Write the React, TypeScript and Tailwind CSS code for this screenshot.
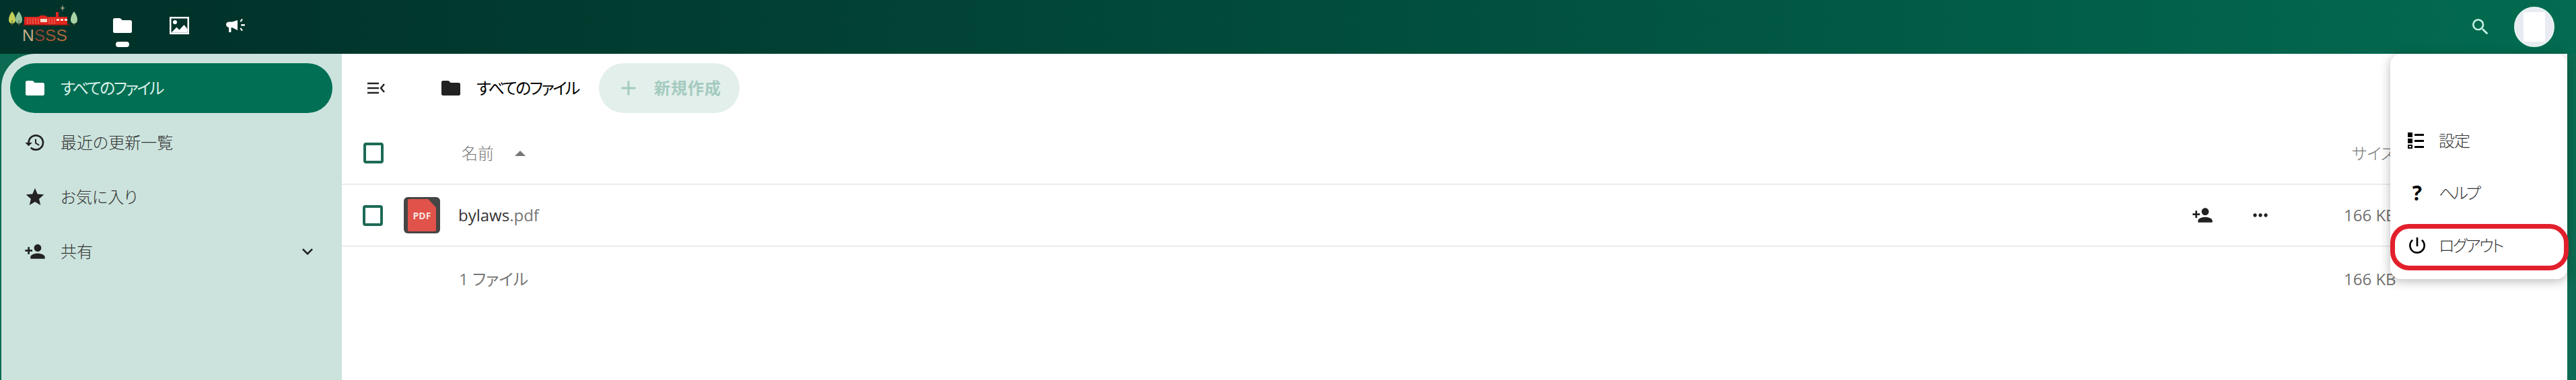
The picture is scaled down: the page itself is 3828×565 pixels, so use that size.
import { MdAdd, MdExpandMore, MdHistory, MdMoreHoriz, MdPersonAdd, MdPowerSettingsNew, MdSearch, MdStar } from 'react-icons/md';

// Nextcloud-style folder with soft corners
function FolderIcon({ className }: { className?: string }) {
  return (
    <svg viewBox="0 0 28 22" className={className} fill="currentColor">
      <path d="M2.500 0h7.200c.7 0 1.300.3 1.800.8L13.600 3h11.900A2.500 2.500 0 0 1 28 5.500v14a2.500 2.500 0 0 1-2.500 2.500h-23A2.500 2.500 0 0 1 0 19.500v-17A2.500 2.500 0 0 1 2.500 0z" />
    </svg>
  );
}

function PhotoIcon() {
  return (
    <svg viewBox="0 0 29 26" className="h-[26px] w-[29px]">
      <path fill="#fff" fillRule="evenodd" d="M0 0h29v26H0z M2.500 2.500v21h24v-21z" />
      <circle cx="8" cy="8" r="3" fill="#fff" />
      <path fill="#fff" d="M2.500 23.500l8-8 4 4 7-7.500 5 6v5.500z" />
    </svg>
  );
}

function MegaphoneIcon() {
  return (
    <svg viewBox="0 0 28 22" className="h-[22px] w-[28px]" fill="#fff">
      <path d="M17 3v15l-8-4H7.500v6a1 1 0 0 1-1 1H5a1 1 0 0 1-1-1v-6.200C1.500 13.300 0 11.500 0 9.500 0 7 2 5.500 4.500 5.500H9z" />
      <rect x="22" y="9" width="6" height="2.500" rx="1" />
      <path d="M20.500 4.500l2.700-3.800 1.700 1.200-2.700 3.800z" />
      <path d="M20.500 15.500l2.700 3.800 1.700-1.200-2.700-3.800z" />
    </svg>
  );
}

function Logo() {
  return (
    <svg viewBox="0 0 130 80" className="h-20 w-[130px] shrink-0">
      <path fill="#c3cf57" d="M18 17c3 4 5 8 5 12 0 4-2 6-5 6s-5-2-5-6c0-4 2-8 5-12z" />
      <path fill="#8fc09a" d="M28 17c3 4 5 8 5 12 0 4-2 6-5 6s-5-2-5-6c0-4 2-8 5-12z" />
      <path fill="#6b6a3a" d="M17.400 30h1.200v8h-1.200zM27.400 30h1.200v8h-1.200zM109.400 30h1.200v8h-1.200z" />
      <path fill="#a9d3a4" d="M110 17c3 4 5 8 5 12 0 4-2 6-5 6s-5-2-5-6c0-4 2-8 5-12z" />
      <path fill="#e0261f" d="M36 25h21c2-3 11-3 13 0h13v-7h4v7h13v12H36z" />
      <path fill="#f3d9c7" d="M60 28h10v5H60zM84 28h4v3h-4zM90 28h4v3h-4zM96 28h4v3h-4z" />
      <path stroke="#f09a85" strokeWidth="0.700" d="M41 27v9M45 27v9M49 27v9M53 27v9M57 27v9M73 27v9M77 27v9M81 27v9" />
      <path fill="#7c1a14" d="M34 36.500h70v1.500H34z" />
      <path fill="#9aa07a" d="M92 13l1 4 1-4 3-1-3-1-1-4-1 4-3 1z" />
      <text x="33" y="61" fontFamily="'Liberation Sans', sans-serif" fontSize="24.500">
        <tspan fill="#c9ae8b">N</tspan>
        <tspan fill="#8d4333">S</tspan>
        <tspan fill="#a2552f">S</tspan>
        <tspan fill="#b0683b">S</tspan>
      </text>
    </svg>
  );
}

function SettingsIcon() {
  return (
    <svg viewBox="0 0 24 24" className="h-6 w-6">
      <path fill="#000" d="M0 0h7v7H0zM0 9h7v7H0zM10 2h14v3H10zM10 11h14v3H10zM10 20h14v3H10z" />
      <path fill="#000" fillRule="evenodd" d="M0 18h7v6H0z M2 20v2h3v-2z" />
    </svg>
  );
}

function NavItem({ children, active }: { children: React.ReactNode; active?: boolean }) {
  return (
    <div className="relative flex h-20 w-[84px] items-center justify-center pb-[4px]">
      {children}
      {active && <span className="absolute bottom-[10px] left-[32px] h-2 w-5 rounded-full bg-white" />}
    </div>
  );
}

const sideItems = [
  { label: '最近の更新一覧', icon: <MdHistory className="h-8 w-8" /> },
  { label: 'お気に入り', icon: <MdStar className="h-8 w-8" /> },
  { label: '共有', icon: <MdPersonAdd className="h-8 w-8" />, chevron: true },
];

function Checkbox() {
  return <span className="block h-[31px] w-[30px] rounded-[4px] border-[4px] border-[#1d6a55]" />;
}

function PdfIcon() {
  return (
    <div className="flex h-[54px] w-[54px] shrink-0 items-center justify-center rounded-[6px] bg-[#454545]">
      <div className="flex h-12 w-[42px] items-center justify-center rounded-[2px] bg-[#e0524a] [clip-path:polygon(0_0,72%_0,100%_26%,100%_100%,0_100%)]">
        <span className="text-[14px] font-bold text-[#fbe3e0]">PDF</span>
      </div>
    </div>
  );
}

export default function App() {
  return (
    <div className="relative flex h-screen flex-col overflow-hidden bg-[#0c6b52] font-['Open_Sans','Noto_Sans_CJK_JP',sans-serif] [font-feature-settings:'palt'] text-[24px] text-[#333]">
      {/* Top bar */}
      <header className="flex h-20 shrink-0 items-center bg-gradient-to-r from-[#01332a] from-[8%] to-[#026b50]">
        <div className="w-[140px]">
          <Logo />
        </div>
        <NavItem active>
          <FolderIcon className="h-[22px] w-7 text-white" />
        </NavItem>
        <NavItem>
          <PhotoIcon />
        </NavItem>
        <NavItem>
          <MegaphoneIcon />
        </NavItem>
        <div className="flex-1" />
        <MdSearch className="mr-[34px] h-8 w-8 text-[#c4f1e3]" />
        <div className="mr-[32px] flex h-[60px] w-[60px] items-center justify-center rounded-full border-2 border-[#e6f4f0] bg-[#e9ebf3]">
          <span className="h-[44px] w-[32px] bg-white" />
        </div>
      </header>

      <div className="flex min-h-0 flex-1 pl-[2px] pr-[13px]">
        {/* Sidebar */}
        <aside className="w-[506px] shrink-0 rounded-tl-[50px] bg-[#cce3dd] pt-[14px] pl-[13px] pr-[14px]">
          <div className="flex h-[74px] items-center rounded-full bg-[#006f53] pl-[23px] text-[#d8f0e9]">
            <FolderIcon className="h-[22px] w-7 text-white" />
            <span className="ml-[24px] tracking-[-2.500px]">すべてのファイル</span>
          </div>
          <ul className="mt-[3px]">
            {sideItems.map((item) => (
              <li key={item.label} className="flex h-[81px] items-center pl-[21px]">
                <span className="flex w-8 justify-center text-[#222]">{item.icon}</span>
                <span className="ml-[22px] flex-1 font-light">{item.label}</span>
                {item.chevron && <MdExpandMore className="mr-[21px] h-8 w-8 text-[#222]" />}
              </li>
            ))}
          </ul>
        </aside>

        {/* File list */}
        <main className="min-w-0 flex-1 bg-white pt-[14px]">
          <div className="flex h-[74px] items-center">
            <svg viewBox="0 0 26 20" className="ml-[38px] h-5 w-[26px]" stroke="#222" strokeWidth="2.500" fill="none">
              <path d="M0 3h17M0 10h17M0 17h17M25 4l-5 6 5 6" />
            </svg>
            <FolderIcon className="ml-[84px] h-[22px] w-7 text-[#222]" />
            <span className="ml-[24px] tracking-[-2.500px] text-black">すべてのファイル</span>
            <div className="ml-[30px] flex h-[74px] w-[209px] items-center rounded-full bg-[#e3efeb] pl-[26px] text-[#a3cabe]">
              <MdAdd className="h-9 w-9" />
              <span className="ml-[20px] font-bold tracking-[1px]">新規作成</span>
            </div>
          </div>

          <div className="mt-[25px] flex h-[80px] items-start">
            <div className="ml-[32px] mt-[19px]">
              <Checkbox />
            </div>
            <div className="ml-[116px] mt-[17px] flex items-center text-[#777]">
              <span className="font-light">名前</span>
              <span className="ml-[31px] h-0 w-0 border-x-[8px] border-b-[8px] border-x-transparent border-b-[#777]" />
            </div>
            <div className="flex-1" />
            <span className="mr-[255px] mt-[17px] font-light text-[#777]">サイズ</span>
          </div>

          <div className="flex h-[94px] items-center border-y-2 border-[#ececec]">
            <div className="ml-[31px]">
              <Checkbox />
            </div>
            <div className="ml-[31px]">
              <PdfIcon />
            </div>
            <span className="ml-[27px]">
              bylaws<span className="text-[#777]">.pdf</span>
            </span>
            <div className="flex-1" />
            <MdPersonAdd className="h-8 w-8 text-[#222]" />
            <MdMoreHoriz className="ml-[54px] h-8 w-8 text-[#222]" />
            <span className="ml-[108px] w-[332px] text-[#707070]">166 KB</span>
          </div>

          <div className="flex h-[96px] items-center">
            <span className="ml-[174px] flex-1 text-[#777]">1 ファイル</span>
            <span className="w-[332px] text-[#707070]">166 KB</span>
          </div>
        </main>
      </div>

      {/* Account menu, open over the list */}
      <div className="absolute left-[3552px] top-20 flex h-[335px] w-[263px] flex-col justify-end rounded-[16px] bg-white pb-[11px] shadow-[0_3px_16px_rgba(0,0,0,0.28)]">
        <div className="flex h-[78px] items-center pl-[26px]">
          <SettingsIcon />
          <span className="ml-[22px] font-light tracking-[-1px]">設定</span>
        </div>
        <div className="flex h-[78px] items-center pl-[26px]">
          <span className="flex w-7 justify-center text-[30px] font-bold leading-none text-black">?</span>
          <span className="ml-[18px] font-light tracking-[-3px]">ヘルプ</span>
        </div>
        <div className="flex h-[78px] items-center pl-[24px]">
          <MdPowerSettingsNew className="h-8 w-8 text-black" />
          <span className="ml-[16px] font-light tracking-[-2.500px]">ログアウト</span>
        </div>
        <div className="absolute left-0 top-[253px] h-[69px] w-[265px] rounded-[28px] border-[7px] border-[#e2202c]" />
      </div>
    </div>
  );
}
